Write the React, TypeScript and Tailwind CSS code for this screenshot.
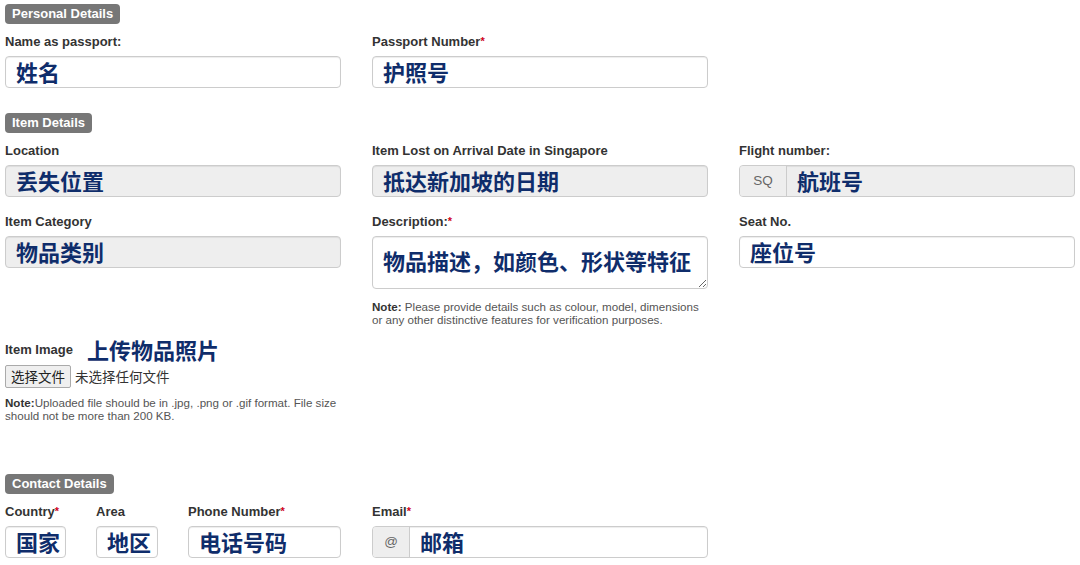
import React from 'react';

const CJK = "font-['Noto_Sans_CJK_SC',sans-serif]";

function Badge({ children }: { children: React.ReactNode }) {
    return (
        <div className="w-fit h-5 px-[7px] rounded-[4px] bg-[#777] text-white text-[13px] font-bold leading-5">
            {children}
        </div>
    );
}

function Label({ text, required }: { text: string; required?: boolean }) {
    return (
        <div className="block h-[15px] mb-[7px] text-[13px] font-bold leading-[15px] text-[#333] whitespace-nowrap">
            {text}
            {required && <span className="text-[#d0021b] text-[11px] align-top">*</span>}
        </div>
    );
}

function Field({ value, disabled, addon, addonWidth = 'w-[47px]' }: { value: string; disabled?: boolean; addon?: string; addonWidth?: string }) {
    return (
        <div
            className={`flex h-8 rounded-[4px] border border-[#ccc] shadow-[inset_0_1px_1px_rgba(0,0,0,0.075)] overflow-hidden ${disabled ? 'bg-[#eee]' : 'bg-white'}`}
        >
            {addon && (
                <div className={`flex items-center justify-center ${addonWidth} shrink-0 border-r border-[#ccc] bg-[#eee] text-[13.5px] text-[#666]`}>
                    {addon}
                </div>
            )}
            <div className={`flex items-center pl-[10px] pb-[3px] text-[22px] font-bold text-[#0f2d6b] leading-none ${CJK}`}>
                {value}
            </div>
        </div>
    );
}

export default function App() {
    return (
        <div className="w-[1080px] h-[565px] bg-white overflow-hidden pl-[5px] pt-1 font-['Liberation_Sans',Arial,sans-serif] text-[#333]">
            {/* Personal */}
            <Badge>Personal Details</Badge>
            <div className="grid grid-cols-[336px_336px_336px] gap-x-[31px] mt-[10px]">
                <div>
                    <Label text="Name as passport:" />
                    <Field value="姓名" />
                </div>
                <div>
                    <Label text="Passport Number" required />
                    <Field value="护照号" />
                </div>
            </div>

            {/* Item */}
            <div className="mt-[25px]">
                <Badge>Item Details</Badge>
            </div>
            <div className="grid grid-cols-[336px_336px_336px] gap-x-[31px] gap-y-[17px] mt-[10px]">
                <div>
                    <Label text="Location" />
                    <Field value="丢失位置" disabled />
                </div>
                <div>
                    <Label text="Item Lost on Arrival Date in Singapore" />
                    <Field value="抵达新加坡的日期" disabled />
                </div>
                <div>
                    <Label text="Flight number:" />
                    <Field value="航班号" disabled addon="SQ" />
                </div>
                <div>
                    <Label text="Item Category" />
                    <Field value="物品类别" disabled />
                </div>
                <div>
                    <Label text="Description:" required />
                    <textarea
                        readOnly
                        value="物品描述，如颜色、形状等特征"
                        className={`block w-full h-[53px] rounded-[4px] border border-[#ccc] shadow-[inset_0_1px_1px_rgba(0,0,0,0.075)] pl-[10px] pt-[8px] text-[22px] font-bold leading-[30px] text-[#0f2d6b] overflow-hidden outline-none ${CJK}`}
                    />
                    <p className="mt-[12px] text-[11.6px] leading-[12.5px] text-[#555]">
                        <b className="text-[#333]">Note:</b> Please provide details such as colour, model, dimensions or any other distinctive features for verification purposes.
                    </p>
                </div>
                <div>
                    <Label text="Seat No." />
                    <Field value="座位号" />
                </div>
            </div>

            {/* Image upload */}
            <div className="flex items-center h-[26px] mt-[11px]">
                <span className="text-[13px] font-bold text-[#333]">Item Image</span>
                <span className={`ml-[14px] pb-[3px] text-[22px] font-bold text-[#0f2d6b] leading-none ${CJK}`}>上传物品照片</span>
            </div>
            <div className={`flex items-center mt-[2px] text-[13.5px] ${CJK}`}>
                <div className="h-[23px] px-[5px] flex items-center border border-[#aaa] rounded-[2px] bg-[#efefef] text-[#222]">选择文件</div>
                <span className="ml-[4px] text-[#333]">未选择任何文件</span>
            </div>
            <p className="mt-[9px] w-[340px] text-[11.6px] leading-[12.5px] text-[#555]">
                <b className="text-[#333]">Note:</b>Uploaded file should be in .jpg, .png or .gif format. File size should not be more than 200 KB.
            </p>

            {/* Contact */}
            <div className="mt-[52px]">
                <Badge>Contact Details</Badge>
            </div>
            <div className="grid grid-cols-[336px_336px_336px] gap-x-[31px] mt-[10px]">
                <div className="flex gap-x-[30px]">
                    <div className="w-[61px]">
                        <Label text="Country" required />
                        <Field value="国家" />
                    </div>
                    <div className="w-[62px]">
                        <Label text="Area" />
                        <Field value="地区" />
                    </div>
                    <div className="w-[153px]">
                        <Label text="Phone Number" required />
                        <Field value="电话号码" />
                    </div>
                </div>
                <div>
                    <Label text="Email" required />
                    <Field value="邮箱" addon="@" addonWidth="w-[37px]" />
                </div>
            </div>
        </div>
    );
}
